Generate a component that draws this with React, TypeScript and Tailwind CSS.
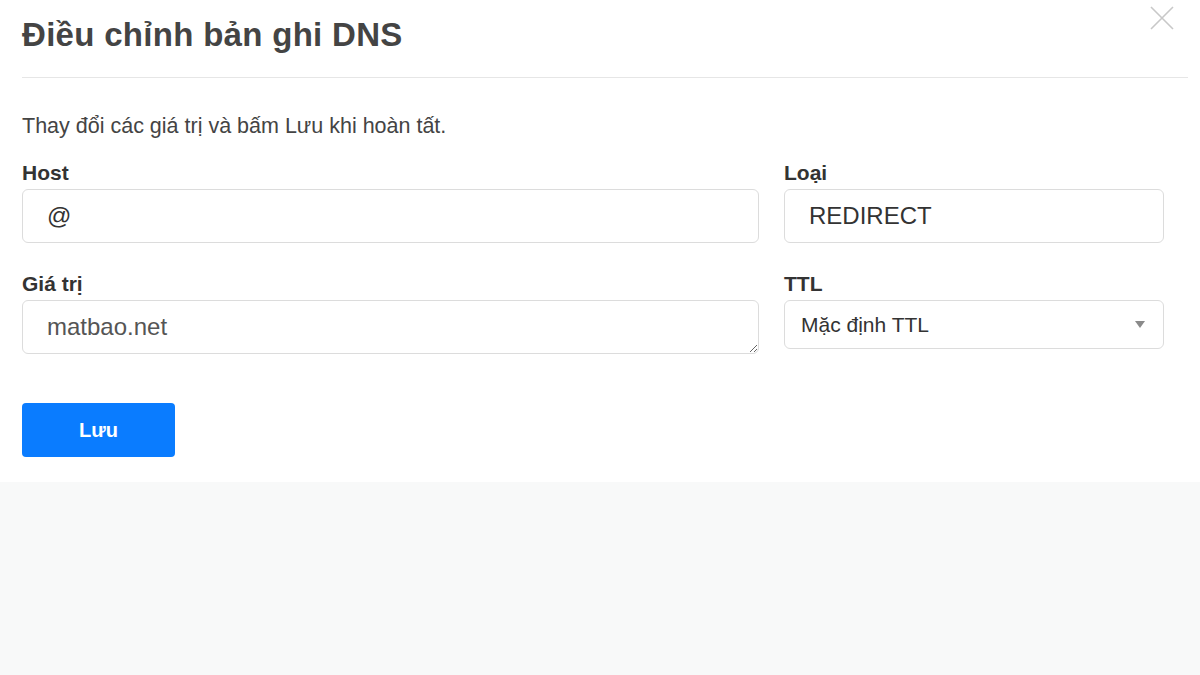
import { FC } from 'react'

const font = { fontFamily: '"Liberation Sans", Arial, sans-serif' }

const Label: FC<{ text: string }> = ({ text }) => (
  <div className="h-[28px] mb-[2px] text-[21px] leading-[28px] font-bold text-[#333]">{text}</div>
)

export default function App() {
  return (
    <div className="w-[1200px] h-[675px] bg-[#f8f9f9] overflow-hidden" style={font}>
      <div className="relative bg-white h-[482px] px-[22px]">
        <button className="absolute right-[26px] top-[6px] w-[24px] h-[24px] text-[#c8c8c8]" aria-label="close">
          <svg viewBox="0 0 24 24" width="24" height="24" fill="none" stroke="currentColor" strokeWidth="1.6">
            <path d="M1 1 L23 23 M23 1 L1 23" />
          </svg>
        </button>
        <div className="h-[78px] border-b border-[#e6e6e6] mr-[-10px] pt-[15px]">
          <h1 className="text-[33px] leading-[40px] font-bold text-[#444] tracking-[0.3px]">Điều chỉnh bản ghi DNS</h1>
        </div>

        <p className="mt-[36px] text-[21.5px] leading-[24px] text-[#444]">Thay đổi các giá trị và bấm Lưu khi hoàn tất.</p>

        <div className="mt-[21px] grid grid-cols-[737px_380px] gap-x-[25px]">
          <div>
            <Label text="Host" />
            <input
              className="w-full h-[54px] border border-[#dcdcdc] rounded-[6px] px-[24px] text-[24px] text-[#333] outline-none"
              defaultValue="@"
            />
          </div>
          <div>
            <Label text="Loại" />
            <input
              className="w-full h-[54px] border border-[#dcdcdc] rounded-[6px] px-[24px] text-[24px] text-[#333] outline-none"
              defaultValue="REDIRECT"
            />
          </div>

          <div className="mt-[27px]">
            <Label text="Giá trị" />
            <textarea
              className="block w-full h-[54px] border border-[#dcdcdc] rounded-[6px] px-[24px] pt-[12px] text-[24px] leading-[28px] text-[#555] outline-none"
              defaultValue="matbao.net"
            />
          </div>
          <div className="mt-[27px]">
            <Label text="TTL" />
            <div className="h-[49px] border border-[#dcdcdc] rounded-[6px] pl-[16px] pr-[18px] flex items-center justify-between text-[21px] text-[#333]">
              <span>Mặc định TTL</span>
              <svg width="10" height="7" viewBox="0 0 10 7">
                <path d="M0 0 H10 L5 7 Z" fill="#8a8a8a" />
              </svg>
            </div>
          </div>
        </div>

        <button className="mt-[49px] w-[153px] h-[54px] rounded-[4px] bg-[#0a7cff] text-white text-[20px] font-bold">
          Lưu
        </button>
      </div>
    </div>
  )
}
